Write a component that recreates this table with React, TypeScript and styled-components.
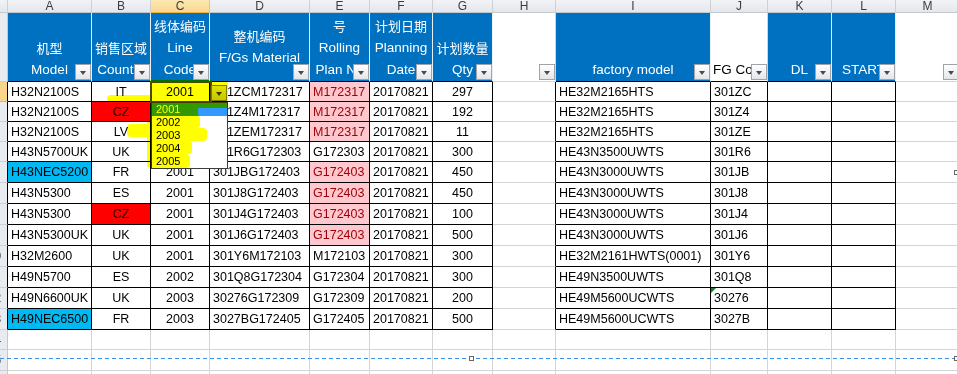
import React from 'react';
import styled, { createGlobalStyle } from 'styled-components';

const BLACK = '#000';
const GRID = '#d4d4d4';
const PINK = '#ffc7ce';
const RED = '#ff0000';
const CYAN = '#00b8f2';

const GlobalStyle = createGlobalStyle`
  html, body {
    margin: 0;
    padding: 0;
    background: #fff;
    overflow: hidden;
  }
  body {
    font-family: 'Liberation Sans', 'Noto Sans CJK SC', sans-serif;
  }
`;

const Sheet = styled.div`
  position: relative;
  width: 957px;
  height: 374px;
  overflow: hidden;
  isolation: isolate;
  background: #fff;
`;

const Grid = styled.div`
  display: grid;
  width: 960px;
  grid-template-columns: 8px 84px 59px 59px 100px 60px 63px 60px 63px 155px 57px 64px 64px 64px;
  grid-template-rows:
    13px 69px 20px 20px 20px 20px 21px 21px 21px 21px 21px 21px 21px 21px
    20px 21px 21px;
`;

const ColHead = styled.div<{ $active?: boolean }>`
  box-sizing: border-box;
  display: flex;
  align-items: center;
  justify-content: center;
  font-size: 12px;
  line-height: 12px;
  color: #3c3c3c;
  background: ${(p) =>
    p.$active ? 'linear-gradient(#fde9b4, #f9d68c)' : 'linear-gradient(#f1f3f6, #e4e7eb)'};
  border-right: 1px solid ${(p) => (p.$active ? '#efc46c' : '#cdd1d7')};
  border-bottom: 1px solid ${(p) => (p.$active ? '#f0b443' : '#c2c8cf')};
`;

const RowHead = styled.div<{ $active?: boolean; $edge?: string }>`
  box-sizing: border-box;
  display: flex;
  justify-content: flex-end;
  align-items: center;
  overflow: hidden;
  background: ${(p) => (p.$active ? '#f9d68c' : '#e8ebef')};
  border-right: 1px solid ${(p) => p.$edge || '#c2c8cf'};
  border-bottom: 1px solid ${(p) => (p.$active ? '#f0b443' : '#cdd1d7')};
`;

const RowNum = styled.span`
  flex: 0 0 25px;
  text-align: center;
  font-size: 12px;
  color: #3c3c3c;
`;

const HeadCell = styled.div<{
  $fill?: boolean;
  $valign?: 'end' | 'center';
  $align?: 'left' | 'center';
  $edge?: string;
}>`
  position: relative;
  box-sizing: border-box;
  display: flex;
  flex-direction: column;
  justify-content: ${(p) => (p.$valign === 'center' ? 'center' : 'flex-end')};
  align-items: ${(p) => (p.$align === 'left' ? 'flex-start' : 'center')};
  padding: 0 2px;
  overflow: hidden;
  background: ${(p) => (p.$fill ? '#0070c0' : '#fff')};
  color: ${(p) => (p.$fill ? '#fff' : '#000')};
  border-right: 1px solid ${(p) => (p.$fill ? '#e8f0f8' : GRID)};
  border-bottom: 1px solid ${(p) => p.$edge || GRID};
`;

const HeadLine = styled.span<{ $cjk?: boolean }>`
  display: block;
  line-height: 22px;
  white-space: nowrap;
  font-size: ${(p) => (p.$cjk ? '13px' : '13.5px')};
  font-family: ${(p) =>
    p.$cjk ? "'Noto Sans CJK SC', sans-serif" : "'Liberation Sans', sans-serif"};
`;

const FilterBtn = styled.span`
  position: absolute;
  right: 0;
  bottom: 1px;
  width: 16px;
  height: 16px;
  box-sizing: border-box;
  border: 1px solid #a0a4aa;
  background: linear-gradient(#ffffff, #e3e5e8);
  display: flex;
  align-items: center;
  justify-content: center;

  &::after {
    content: '';
    margin-top: 2px;
    border-left: 3.5px solid transparent;
    border-right: 3.5px solid transparent;
    border-top: 4px solid #4a4a4a;
  }
`;

const Cell = styled.div<{
  $align?: 'left' | 'center';
  $bg?: string;
  $color?: string;
  $line?: string;
  $right?: string;
  $flag?: boolean;
}>`
  position: relative;
  box-sizing: border-box;
  display: flex;
  align-items: center;
  justify-content: ${(p) => (p.$align === 'center' ? 'center' : 'flex-start')};
  padding: 0 3px;
  overflow: hidden;
  white-space: nowrap;
  font-size: 12.5px;
  background: ${(p) => p.$bg || '#fff'};
  color: ${(p) => p.$color || '#000'};
  border-right: 1px solid ${(p) => p.$right || p.$line || GRID};
  border-bottom: 1px solid ${(p) => p.$line || GRID};

  ${(p) =>
    p.$flag &&
    `
    &::before {
      content: '';
      position: absolute;
      left: 0;
      top: 0;
      border-top: 5px solid #1f7a1f;
      border-right: 5px solid transparent;
    }
  `}
`;

// the open list on C2
const ActiveCell = styled.div`
  position: absolute;
  left: 150px;
  top: 81px;
  width: 62px;
  height: 22px;
  box-sizing: border-box;
  border: 2px solid #4a4a4a;
`;

const DropBtn = styled.div`
  position: absolute;
  left: 211px;
  top: 85px;
  width: 16px;
  height: 16px;
  box-sizing: border-box;
  border: 1px solid #7c7c7c;
  background: linear-gradient(#e2e2e2, #c6c6c6);
  display: flex;
  align-items: center;
  justify-content: center;

  &::after {
    content: '';
    margin-top: 1px;
    border-left: 3.5px solid transparent;
    border-right: 3.5px solid transparent;
    border-top: 4px solid #3a3a3a;
  }
`;

const List = styled.div`
  position: absolute;
  left: 151px;
  top: 102px;
  width: 77px;
  box-sizing: border-box;
  border: 1px solid #3c3c3c;
  background: #fff;
`;

const ListItem = styled.div<{ $selected?: boolean }>`
  height: 13px;
  line-height: 13px;
  padding-left: 4px;
  font-size: 11px;
  background: ${(p) => (p.$selected ? '#3399ff' : '#fff')};
  color: ${(p) => (p.$selected ? '#fff' : '#000')};
`;

// highlighter strokes painted over the picture
const Marker = styled.div<{ $x: number; $y: number; $w: number; $h: number; $r?: number }>`
  position: absolute;
  left: ${(p) => p.$x}px;
  top: ${(p) => p.$y}px;
  width: ${(p) => p.$w}px;
  height: ${(p) => p.$h}px;
  border-radius: ${(p) => p.$r ?? 2}px;
  background: #ffff00;
  mix-blend-mode: multiply;
`;

const PageBreak = styled.div`
  position: absolute;
  left: 0;
  top: 358px;
  width: 955px;
  height: 1px;
  background: repeating-linear-gradient(90deg, #3a8ee6 0 4px, transparent 4px 7px);
`;

const Handle = styled.div<{ $x: number; $y: number }>`
  position: absolute;
  left: ${(p) => p.$x}px;
  top: ${(p) => p.$y}px;
  width: 5px;
  height: 5px;
  box-sizing: border-box;
  border: 1px solid #666;
  background: #fff;
`;

type Head = {
  lines: string[];
  fill?: boolean;
  valign?: 'end' | 'center';
  align?: 'left' | 'center';
  table?: boolean;
};

const HEADS: Head[] = [
  { lines: ['机型', 'Model'], fill: true, table: true },
  { lines: ['销售区域', 'Country'], fill: true, table: true },
  { lines: ['线体编码', 'Line', 'Code'], fill: true, table: true },
  { lines: ['整机编码', 'F/Gs Material'], fill: true, valign: 'center', table: true },
  { lines: ['号', 'Rolling', 'Plan No'], fill: true, table: true },
  { lines: ['计划日期', 'Planning', 'Date'], fill: true, table: true },
  { lines: ['计划数量', 'Qty'], fill: true, table: true },
  { lines: [] },
  { lines: ['factory model'], fill: true, table: true },
  { lines: ['FG Code'], align: 'left', table: true },
  { lines: ['DL'], fill: true, table: true },
  { lines: ['START'], fill: true, table: true },
  { lines: [] },
];

type Row = {
  a: string;
  b: string;
  c: string;
  d: string;
  e: string;
  f: string;
  g: string;
  i: string;
  j: string;
  aBg?: string;
  bBg?: string;
  pink?: boolean;
  flag?: boolean;
};

const ROWS: Row[] = [
  { a: 'H32N2100S', b: 'IT', c: '2001', d: '301ZCM172317', e: 'M172317', f: '20170821', g: '297', i: 'HE32M2165HTS', j: '301ZC', pink: true },
  { a: 'H32N2100S', b: 'CZ', bBg: RED, c: '2001', d: '301Z4M172317', e: 'M172317', f: '20170821', g: '192', i: 'HE32M2165HTS', j: '301Z4', pink: true },
  { a: 'H32N2100S', b: 'LV', c: '2001', d: '301ZEM172317', e: 'M172317', f: '20170821', g: '11', i: 'HE32M2165HTS', j: '301ZE', pink: true },
  { a: 'H43N5700UK', b: 'UK', c: '2001', d: '301R6G172303', e: 'G172303', f: '20170821', g: '300', i: 'HE43N3500UWTS', j: '301R6' },
  { a: 'H43NEC5200', aBg: CYAN, b: 'FR', c: '2001', d: '301JBG172403', e: 'G172403', f: '20170821', g: '450', i: 'HE43N3000UWTS', j: '301JB', pink: true },
  { a: 'H43N5300', b: 'ES', c: '2001', d: '301J8G172403', e: 'G172403', f: '20170821', g: '450', i: 'HE43N3000UWTS', j: '301J8', pink: true },
  { a: 'H43N5300', b: 'CZ', bBg: RED, c: '2001', d: '301J4G172403', e: 'G172403', f: '20170821', g: '100', i: 'HE43N3000UWTS', j: '301J4', pink: true },
  { a: 'H43N5300UK', b: 'UK', c: '2001', d: '301J6G172403', e: 'G172403', f: '20170821', g: '500', i: 'HE43N3000UWTS', j: '301J6', pink: true },
  { a: 'H32M2600', b: 'UK', c: '2001', d: '301Y6M172103', e: 'M172103', f: '20170821', g: '300', i: 'HE32M2161HWTS(0001)', j: '301Y6' },
  { a: 'H49N5700', b: 'ES', c: '2002', d: '301Q8G172304', e: 'G172304', f: '20170821', g: '300', i: 'HE49N3500UWTS', j: '301Q8' },
  { a: 'H49N6600UK', b: 'UK', c: '2003', d: '30276G172309', e: 'G172309', f: '20170821', g: '200', i: 'HE49M5600UCWTS', j: '30276', flag: true },
  { a: 'H49NEC6500', aBg: CYAN, b: 'FR', c: '2003', d: '3027BG172405', e: 'G172405', f: '20170821', g: '500', i: 'HE49M5600UCWTS', j: '3027B' },
];

const LETTERS = ['A', 'B', 'C', 'D', 'E', 'F', 'G', 'H', 'I', 'J', 'K', 'L', 'M'];
const OPTIONS = ['2001', '2002', '2003', '2004', '2005'];

const MARKS = [
  { x: 150, y: 80, w: 62, h: 24, r: 1 },
  { x: 210, y: 82, w: 18, h: 21, r: 1 },
  { x: 107, y: 95, w: 46, h: 8, r: 4 },
  { x: 140, y: 95, w: 14, h: 14, r: 3 },
  { x: 127, y: 124, w: 26, h: 13, r: 4 },
  { x: 147, y: 112, w: 6, h: 55, r: 2 },
  { x: 151, y: 102, w: 77, h: 6, r: 0 },
  { x: 151, y: 102, w: 47, h: 13, r: 0 },
  { x: 147, y: 115, w: 53, h: 13, r: 3 },
  { x: 147, y: 128, w: 60, h: 13, r: 4 },
  { x: 147, y: 141, w: 45, h: 13, r: 3 },
  { x: 147, y: 154, w: 43, h: 14, r: 4 },
];

const isCjk = (s: string) => /[\u4e00-\u9fff]/.test(s);

const App: React.FC = () => {
  const emptyRows = [14, 15, 16];

  return (
    <>
      <GlobalStyle />
      <Sheet>
        <Grid>
          <ColHead />
          {LETTERS.map((l) => (
            <ColHead key={l} $active={l === 'C'}>
              {l}
            </ColHead>
          ))}

          <RowHead>
            <RowNum>1</RowNum>
          </RowHead>
          {HEADS.map((h, idx) => (
            <HeadCell
              key={idx}
              $fill={h.fill}
              $valign={h.valign}
              $align={h.align}
              $edge={h.table ? BLACK : GRID}
            >
              {h.lines.map((line) => (
                <HeadLine key={line} $cjk={isCjk(line)}>
                  {line}
                </HeadLine>
              ))}
              <FilterBtn />
            </HeadCell>
          ))}

          {ROWS.map((row, idx) => (
            <React.Fragment key={idx}>
              <RowHead $active={idx === 0} $edge={BLACK}>
                <RowNum>{idx + 2}</RowNum>
              </RowHead>
              <Cell $line={BLACK} $bg={row.aBg}>
                {row.a}
              </Cell>
              <Cell $line={BLACK} $bg={row.bBg} $color={row.bBg ? '#2a0000' : undefined} $align="center">
                {row.b}
              </Cell>
              <Cell $line={BLACK} $align="center">
                {row.c}
              </Cell>
              <Cell $line={BLACK}>{row.d}</Cell>
              <Cell
                $line={BLACK}
                $bg={row.pink ? PINK : undefined}
                $color={row.pink ? '#9c0006' : undefined}
              >
                {row.e}
              </Cell>
              <Cell $line={BLACK}>{row.f}</Cell>
              <Cell $line={BLACK} $align="center">
                {row.g}
              </Cell>
              <Cell $right={BLACK} />
              <Cell $line={BLACK}>{row.i}</Cell>
              <Cell $line={BLACK} $flag={row.flag}>
                {row.j}
              </Cell>
              <Cell $line={BLACK} />
              <Cell $line={BLACK} />
              <Cell />
            </React.Fragment>
          ))}

          {emptyRows.map((n) => (
            <React.Fragment key={n}>
              <RowHead>
                <RowNum>{n}</RowNum>
              </RowHead>
              {LETTERS.map((l) => (
                <Cell key={l} />
              ))}
            </React.Fragment>
          ))}
        </Grid>

        <ActiveCell />
        <DropBtn />
        <List>
          {OPTIONS.map((o, i) => (
            <ListItem key={o} $selected={i === 0}>
              {o}
            </ListItem>
          ))}
        </List>

        {MARKS.map((m, i) => (
          <Marker key={i} $x={m.x} $y={m.y} $w={m.w} $h={m.h} $r={m.r} />
        ))}

        <PageBreak />
        <Handle $x={469} $y={356} />
        <Handle $x={954} $y={356} />
        <Handle $x={954} $y={170} />
      </Sheet>
    </>
  );
};

export default App;
